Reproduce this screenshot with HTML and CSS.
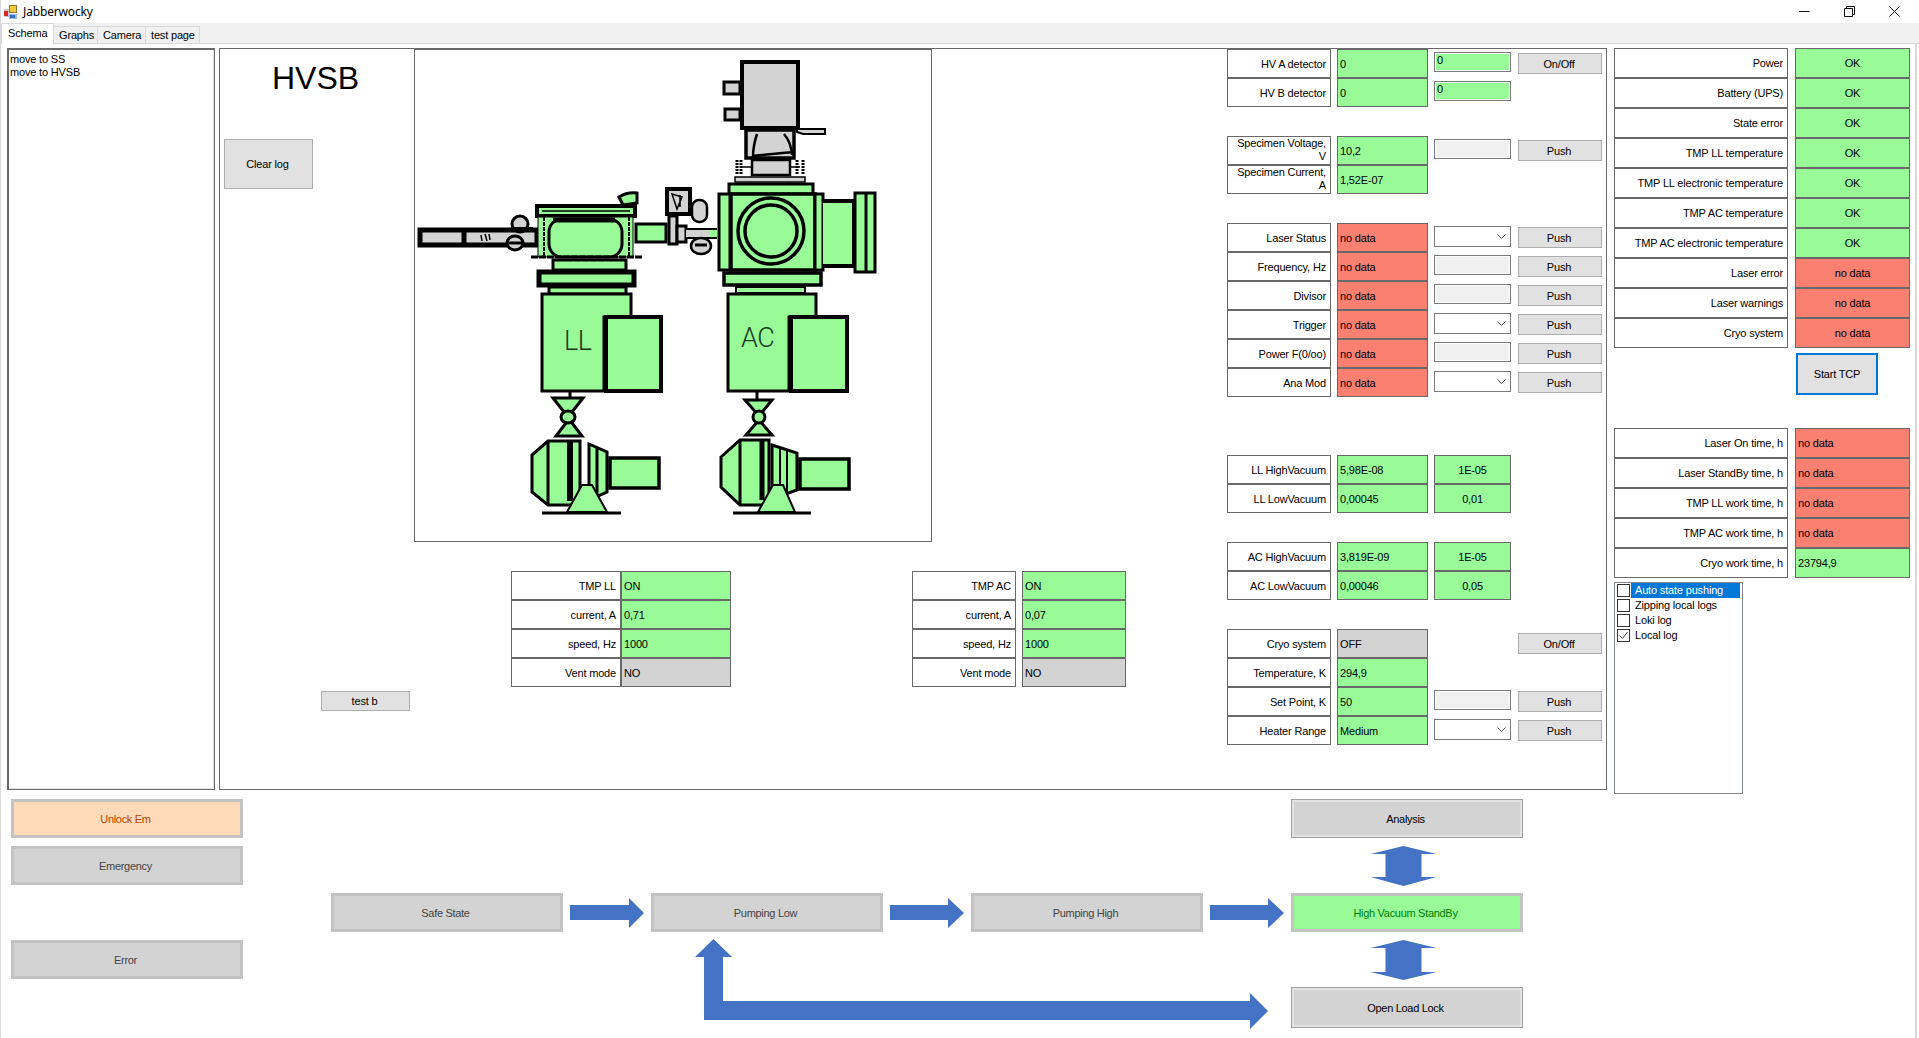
FILE: index.html
```html
<!DOCTYPE html>
<html lang="en">
<head>
    <meta charset="UTF-8">
    <title>Jabberwocky</title>
    <link rel="stylesheet" href="styles.css">
</head>
<body>
    <div class="window">
        <header class="titlebar">
            <svg class="app-icon" width="16" height="16" viewBox="0 0 16 16">
                <rect x="1" y="5" width="5" height="8" fill="#c9c9c9"/>
                <rect x="1" y="7" width="4" height="5" fill="#d22a1e"/>
                <rect x="6" y="1" width="8" height="8" fill="#8a7a3a"/>
                <rect x="7" y="2" width="6" height="6" fill="#f7c93c"/>
                <rect x="6" y="10" width="8" height="5" fill="#9fb6d8"/>
                <rect x="7" y="11" width="5" height="3" fill="#2f6fd0"/>
            </svg>
            <span class="title">Jabberwocky</span>
            <div class="caption">
                <svg width="11" height="11" viewBox="0 0 11 11"><path d="M0 5.5h10.5" stroke="#111" fill="none"/></svg>
                <svg width="11" height="11" viewBox="0 0 11 11"><path d="M.5 2.5h8v8h-8zM2.5 2.5v-2h8v8h-2" stroke="#111" fill="none"/></svg>
                <svg width="11" height="11" viewBox="0 0 11 11"><path d="M.5.5l10 10M10.5.5l-10 10" stroke="#111" fill="none"/></svg>
            </div>
        </header>

        <nav class="tabs">
            <span class="tab active">Schema</span>
            <span class="tab">Graphs</span>
            <span class="tab">Camera</span>
            <span class="tab">test page</span>
        </nav>

        <div class="tab-page">
            <div class="top">
                <div class="log">move to SS<br>move to HVSB</div>

                <main class="main">
                    <div class="left-col">
                        <h1 class="state-name">HVSB</h1>
                        <button class="btn clear-log">Clear log</button>
                        <button class="btn test-b">test b</button>
                    </div>

                    <div class="center-col">
                        <div class="schema">
                            <svg width="516" height="490" viewBox="415 50 516 490">
                                <g stroke="#000" stroke-width="4" fill="#98fb98">
                                    <!-- load lock rod -->
                                    <rect x="420" y="230" width="117" height="15" fill="#d3d3d3" stroke-width="5"/>
                                    <path d="M464 230v15" stroke-width="5"/>
                                    <path d="M481 235l1 6M485 234l2 7M489 234l1 6" stroke-width="1.500" fill="none"/>
                                    <ellipse cx="520" cy="224" rx="8" ry="8" fill="#d3d3d3" stroke-width="3"/>
                                    <path d="M512 229h21" stroke-width="4"/>
                                    <ellipse cx="515" cy="243" rx="8" ry="7" fill="#d3d3d3" stroke-width="3"/>
                                    <path d="M507 243h16" stroke-width="3"/>

                                    <!-- load lock chamber -->
                                    <path d="M619 197q8-5 18-4v10l-14 2z" stroke-width="3"/>
                                    <rect x="537" y="206" width="98" height="10"/>
                                    <path d="M542 211h88" stroke-width="1.500"/>
                                    <rect x="538" y="217" width="95" height="40" stroke-width="1"/>
                                    <path d="M544 217v39M629 217v39" stroke-width="2" stroke-dasharray="4 1"/>
                                    <rect x="549" y="219" width="73" height="38" rx="13" stroke-width="3"/>
                                    <path d="M553 220h62" stroke-width="5"/>
                                    <path d="M531 257h111" stroke-width="3" stroke-dasharray="7 1"/>
                                    <rect x="553" y="260" width="73" height="10" stroke-width="3"/>
                                    <rect x="539" y="272" width="95" height="13" stroke-width="5"/>
                                    <rect x="549" y="287" width="77" height="7" stroke-width="3"/>

                                    <!-- load lock pump -->
                                    <path d="M542 294h89v23h-27v74h-62z" stroke-width="3"/>
                                    <rect x="606" y="317" width="55" height="74" stroke-width="4"/>
                                    <path d="M570 392v6" stroke-width="3"/>
                                    <path d="M553 398h30l-15 19zM556 436h26l-13-17z" stroke-width="3"/>
                                    <ellipse cx="568" cy="417" rx="7" ry="6" stroke-width="3"/>
                                    <path d="M532 455l16-14h32v64h-32l-16-13z" stroke-width="3"/>
                                    <path d="M548 441v64" stroke-width="3"/>
                                    <path d="M570 441v60" stroke-width="6"/>
                                    <path d="M589 444l18 8v40l-18 8z" stroke-width="3"/>
                                    <path d="M597 447v48" stroke-width="3"/>
                                    <rect x="610" y="458" width="49" height="30" stroke-width="3.500"/>
                                    <path d="M582 485l-15 27h40l-15-27z" stroke-width="2"/>
                                    <path d="M542 513h79" stroke-width="3"/>

                                    <!-- transfer valve -->
                                    <rect x="636" y="224" width="30" height="18" stroke-width="3"/>
                                    <rect x="667" y="189" width="23" height="25" fill="#d3d3d3" stroke-width="4"/>
                                    <path d="M672 194l10 3-5 12zM680 195v12" fill="none" stroke-width="1.500"/>
                                    <rect x="669" y="216" width="8" height="28" fill="#d3d3d3" stroke-width="3"/>
                                    <rect x="677" y="226" width="9" height="16" fill="#d3d3d3" stroke-width="3"/>
                                    <path d="M686 229h31M686 238h31" stroke-width="2"/>
                                    <rect x="686" y="230" width="31" height="7" fill="#d3d3d3" stroke="none"/>
                                    <rect x="710" y="230" width="7" height="7" stroke="none"/>
                                    <rect x="692" y="200" width="15" height="22" rx="7" fill="#d3d3d3" stroke-width="2.500"/>
                                    <ellipse cx="701" cy="246" rx="10" ry="8" fill="#d3d3d3" stroke-width="2.500"/>
                                    <path d="M695 245h12" stroke-width="3"/>

                                    <!-- analysis chamber -->
                                    <rect x="742" y="62" width="56" height="66" fill="#d3d3d3"/>
                                    <rect x="724" y="82" width="16" height="12" fill="#d3d3d3" stroke-width="3"/>
                                    <rect x="725" y="109" width="15" height="11" fill="#d3d3d3" stroke-width="3"/>
                                    <path d="M797 129h28v5h-22l-6-2z" fill="#d3d3d3" stroke-width="2"/>
                                    <rect x="746" y="130" width="48" height="28" fill="#d3d3d3" stroke-width="3.500"/>
                                    <path d="M757 134q-4 12-4 23M784 134q7 8 8 21M752 156l41-4" fill="none" stroke-width="2.500"/>
                                    <rect x="752" y="160" width="38" height="15" fill="#d3d3d3" stroke-width="2.500"/>
                                    <path d="M737 160v14M741 160v14M797 160v14M803 160v14" stroke-width="3" stroke-dasharray="2 1" fill="none"/>
                                    <path d="M742 167h9M791 167h9" stroke-width="1.500"/>
                                    <rect x="735" y="177" width="70" height="5" fill="#d3d3d3" stroke-width="1.500"/>
                                    <rect x="729" y="184" width="84" height="10" stroke-width="3"/>
                                    <rect x="719" y="194" width="11" height="76" stroke-width="3"/>
                                    <rect x="731" y="194" width="84" height="76" stroke-width="3.500"/>
                                    <rect x="815" y="194" width="8" height="76" stroke-width="3"/>
                                    <circle cx="771" cy="231" r="33" stroke-width="3.500"/>
                                    <circle cx="771" cy="231" r="26" stroke-width="3.500"/>
                                    <path d="M823 201h31v65h-31" stroke-width="4"/>
                                    <rect x="855" y="193" width="20" height="79" stroke-width="3"/>
                                    <path d="M866 193v79" stroke-width="3"/>
                                    <rect x="724" y="273" width="97" height="12" stroke-width="3.500"/>
                                    <rect x="736" y="287" width="69" height="6" stroke-width="2"/>

                                    <!-- analysis chamber pump -->
                                    <path d="M728 294h88v23h-27v74h-61z" stroke-width="3"/>
                                    <rect x="791" y="317" width="56" height="74" stroke-width="4"/>
                                    <path d="M757 392v7" stroke-width="3"/>
                                    <path d="M745 400h27l-13 16zM746 435h26l-13-15z" stroke-width="3"/>
                                    <ellipse cx="759" cy="417" rx="6" ry="6" stroke-width="3"/>
                                    <path d="M721 457l19-17h29v65h-29l-19-18z" stroke-width="3"/>
                                    <path d="M740 440v65" stroke-width="3"/>
                                    <path d="M762 440v60" stroke-width="5"/>
                                    <path d="M772 445l25 8v37l-25 9z" stroke-width="3"/>
                                    <path d="M780 448v46M787 450v42" stroke-width="2"/>
                                    <rect x="800" y="459" width="49" height="30" stroke-width="3.500"/>
                                    <path d="M773 485l-15 27h37l-12-27z" stroke-width="2"/>
                                    <path d="M733 513h78" stroke-width="3"/>
                                </g>
                                <text class="schema-label" x="564" y="350">LL</text>
                                <text class="schema-label" x="741" y="347">AC</text>
                            </svg>
                        </div>

                        <div class="pumps">
                            <div class="pump pump-ll">
                                <div class="label">TMP LL</div><div class="value ok">ON</div>
                                <div class="label">current, A</div><div class="value ok">0,71</div>
                                <div class="label">speed, Hz</div><div class="value ok">1000</div>
                                <div class="label">Vent mode</div><div class="value off">NO</div>
                            </div>
                            <div class="pump pump-ac">
                                <div class="label">TMP AC</div><div class="value ok">ON</div>
                                <div class="label">current, A</div><div class="value ok">0,07</div>
                                <div class="label">speed, Hz</div><div class="value ok">1000</div>
                                <div class="label">Vent mode</div><div class="value off">NO</div>
                            </div>
                        </div>
                    </div>

                    <div class="fields">
                        <div class="group">
                            <div class="label">HV A detector</div><div class="value ok">0</div>
                            <input class="entry entry-ok" value="0"><button class="btn push">On/Off</button>
                            <div class="label">HV B detector</div><div class="value ok">0</div>
                            <input class="entry entry-ok" value="0"><span></span>
                        </div>

                        <div class="group">
                            <div class="label two-line">Specimen Voltage,<br>V</div><div class="value ok">10,2</div>
                            <input class="entry"><button class="btn push">Push</button>
                            <div class="label two-line">Specimen Current,<br>A</div><div class="value ok">1,52E-07</div>
                            <span></span><span></span>
                        </div>

                        <div class="group wide-gap">
                            <div class="label">Laser Status</div><div class="value bad">no data</div>
                            <div class="combo"><svg width="9" height="5" viewBox="0 0 9 5"><path d="M.5.5l4 4 4-4" fill="none" stroke="#555"/></svg></div><button class="btn push">Push</button>
                            <div class="label">Frequency, Hz</div><div class="value bad">no data</div>
                            <input class="entry"><button class="btn push">Push</button>
                            <div class="label">Divisor</div><div class="value bad">no data</div>
                            <input class="entry"><button class="btn push">Push</button>
                            <div class="label">Trigger</div><div class="value bad">no data</div>
                            <div class="combo"><svg width="9" height="5" viewBox="0 0 9 5"><path d="M.5.5l4 4 4-4" fill="none" stroke="#555"/></svg></div><button class="btn push">Push</button>
                            <div class="label">Power F(0/oo)</div><div class="value bad">no data</div>
                            <input class="entry"><button class="btn push">Push</button>
                            <div class="label">Ana Mod</div><div class="value bad">no data</div>
                            <div class="combo"><svg width="9" height="5" viewBox="0 0 9 5"><path d="M.5.5l4 4 4-4" fill="none" stroke="#555"/></svg></div><button class="btn push">Push</button>
                        </div>

                        <div class="group">
                            <div class="label">LL HighVacuum</div><div class="value ok">5,98E-08</div>
                            <div class="value ok centered">1E-05</div><span></span>
                            <div class="label">LL LowVacuum</div><div class="value ok">0,00045</div>
                            <div class="value ok centered">0,01</div><span></span>
                        </div>

                        <div class="group">
                            <div class="label">AC HighVacuum</div><div class="value ok">3,819E-09</div>
                            <div class="value ok centered">1E-05</div><span></span>
                            <div class="label">AC LowVacuum</div><div class="value ok">0,00046</div>
                            <div class="value ok centered">0,05</div><span></span>
                        </div>

                        <div class="group">
                            <div class="label">Cryo system</div><div class="value off">OFF</div>
                            <span></span><button class="btn push">On/Off</button>
                            <div class="label">Temperature, K</div><div class="value ok">294,9</div>
                            <span></span><span></span>
                            <div class="label">Set Point, K</div><div class="value ok">50</div>
                            <input class="entry"><button class="btn push">Push</button>
                            <div class="label">Heater Range</div><div class="value ok">Medium</div>
                            <div class="combo"><svg width="9" height="5" viewBox="0 0 9 5"><path d="M.5.5l4 4 4-4" fill="none" stroke="#555"/></svg></div><button class="btn push">Push</button>
                        </div>
                    </div>
                </main>

                <aside class="side">
                    <div class="status">
                        <div class="label">Power</div><div class="value ok centered">OK</div>
                        <div class="label">Battery (UPS)</div><div class="value ok centered">OK</div>
                        <div class="label">State error</div><div class="value ok centered">OK</div>
                        <div class="label">TMP LL temperature</div><div class="value ok centered">OK</div>
                        <div class="label">TMP LL electronic temperature</div><div class="value ok centered">OK</div>
                        <div class="label">TMP AC temperature</div><div class="value ok centered">OK</div>
                        <div class="label">TMP AC electronic temperature</div><div class="value ok centered">OK</div>
                        <div class="label">Laser error</div><div class="value bad centered">no data</div>
                        <div class="label">Laser warnings</div><div class="value bad centered">no data</div>
                        <div class="label">Cryo system</div><div class="value bad centered">no data</div>
                    </div>

                    <button class="btn start-tcp">Start TCP</button>

                    <div class="status">
                        <div class="label">Laser On time, h</div><div class="value bad">no data</div>
                        <div class="label">Laser StandBy time, h</div><div class="value bad">no data</div>
                        <div class="label">TMP LL work time, h</div><div class="value bad">no data</div>
                        <div class="label">TMP AC work time, h</div><div class="value bad">no data</div>
                        <div class="label">Cryo work time, h</div><div class="value ok">23794,9</div>
                    </div>

                    <div class="checklist">
                        <div class="check-row"><span class="box"></span><span class="check-text selected">Auto state pushing</span></div>
                        <div class="check-row"><span class="box"></span><span class="check-text">Zipping local logs</span></div>
                        <div class="check-row"><span class="box"></span><span class="check-text">Loki log</span></div>
                        <div class="check-row"><span class="box"><svg width="11" height="11" viewBox="0 0 11 11"><path d="M1.500 5.500l3 3 5-6.500" fill="none" stroke="#444"/></svg></span><span class="check-text">Local log</span></div>
                    </div>
                </aside>
            </div>

            <section class="states">
                <button class="state unlock">Unlock Em</button>
                <button class="state analysis raised">Analysis</button>
                <button class="state emergency">Emergency</button>
                <button class="state safe">Safe State</button>
                <button class="state low">Pumping Low</button>
                <button class="state high">Pumping High</button>
                <button class="state standby">High Vacuum StandBy</button>
                <button class="state error">Error</button>
                <button class="state load-lock raised">Open Load Lock</button>

                <!-- arrows between the states, over the grid -->
                <svg class="arrows" width="1919" height="240" viewBox="0 799 1919 240" fill="#4472c4">
                    <path d="M570 905h59v-7l15 15-15 15v-8h-59z"/>
                    <path d="M890 905h58v-7l16 15-16 15v-8h-58z"/>
                    <path d="M1210 905h58v-7l16 15-16 15v-8h-58z"/>
                    <path d="M1403.500 846l33 8h-15v23h15l-33 9-33-9h15v-23h-15z"/>
                    <path d="M1403.500 940l33 8h-15v24h15l-33 8-33-8h15v-24h-15z"/>
                    <path d="M713.500 939l18.500 18h-9v44h527v-8l18 18-18 18v-9h-546v-63h-9z"/>
                </svg>
            </section>
        </div>
    </div>
</body>
</html>
```

FILE: styles.css
```css
html, body {
    margin: 0;
    padding: 0;
    background: #ffffff;
}

body {
    font-family: "Liberation Sans", Arial, sans-serif;
    font-size: 11px;
    letter-spacing: -0.17px;
    color: #000;
}

.window {
    width: 1919px;
    height: 1038px;
    overflow: hidden;
    box-sizing: border-box;
    border-left: 1px solid #d9d9d9;
}

/* title bar */
.titlebar {
    height: 23px;
    display: flex;
    align-items: center;
    padding-left: 2px;
}

.app-icon {
    margin-right: 4px;
}

.title {
    font-family: "Noto Sans", sans-serif;
    font-size: 12px;
    letter-spacing: -0.15px;
    flex: 1;
}

.caption {
    display: flex;
    gap: 34px;
    padding-right: 19px;
}

/* tabs */
.tabs {
    height: 20px;
    display: flex;
    align-items: flex-end;
    background: #f0f0f0;
    border-bottom: 1px solid #d9d9d9;
    box-sizing: content-box;
}

.tab {
    height: 17px;
    line-height: 17px;
    padding: 0 5px;
    border: 1px solid #d9d9d9;
    border-bottom: none;
    border-left: none;
    box-sizing: border-box;
    font-size: 11px;
    white-space: nowrap;
}

.tab:nth-child(2) { width: 44px; }
.tab:nth-child(3) { width: 48px; }
.tab:nth-child(4) { width: 54px; }

.tab.active {
    width: 53px;
    height: 21px;
    margin-bottom: -1px;
    background: #ffffff;
    padding-left: 6px;
    line-height: 18px;
    border-left: 1px solid #d9d9d9;
    align-self: flex-end;
}

.tab-page {
    border-right: 2px solid #d9d9d9;
    height: 994px;
    width: 1916px;
    padding-top: 4px;
    box-sizing: border-box;
}

.top {
    display: flex;
    height: 742px;
    padding-left: 6px;
}

/* log */
.log {
    width: 208px;
    height: 742px;
    box-sizing: border-box;
    padding: 4px 0 0 2px;
    border: 1px solid #696969;
    box-shadow: inset 1px 1px 0 #696969, inset -1px -1px 0 #e3e3e3;
    line-height: 13px;
}

/* main panel */
.main {
    width: 1388px;
    height: 742px;
    margin-left: 4px;
    box-sizing: border-box;
    border: 1px solid #696969;
    display: flex;
}

.left-col {
    width: 194px;
    flex: none;
    display: flex;
    flex-direction: column;
}

.state-name {
    margin: 13px 0 0 52px;
    font-size: 32px;
    font-weight: normal;
    line-height: 32px;
    letter-spacing: 0;
}

.btn {
    font-family: inherit;
    font-size: inherit;
    letter-spacing: inherit;
    color: #000;
    background: #e1e1e1;
    border: 1px solid #adadad;
    padding: 0 2px 0 0;
}

.clear-log {
    width: 89px;
    height: 50px;
    margin: 45px 0 0 4px;
}

.test-b {
    width: 89px;
    height: 20px;
    margin: 502px 0 0 101px;
}

.center-col {
    width: 813px;
    flex: none;
}

.schema {
    width: 518px;
    height: 493px;
    box-sizing: border-box;
    border: 1px solid #696969;
}

.schema svg {
    display: block;
}

.schema-label {
    font-family: Roboto, "Liberation Sans", sans-serif;
    font-size: 27px;
    font-weight: 300;
    letter-spacing: -0.5px;
    fill: #1a3a1a;
}

.pumps {
    display: flex;
    margin: 29px 0 0 97px;
    gap: 181px;
}

.pump {
    display: grid;
    grid-auto-rows: 29px;
}

.pump-ll {
    grid-template-columns: 110px 110px;
}

.pump-ac {
    grid-template-columns: 104px 104px;
    column-gap: 6px;
}

/* label and value cells, used in every table */
.label,
.value {
    box-sizing: border-box;
    border: 1px solid #696969;
    display: flex;
    align-items: center;
    white-space: nowrap;
}

.label {
    justify-content: flex-end;
    padding-right: 4px;
    background: #ffffff;
}

.two-line {
    display: block;
    text-align: right;
    line-height: 13px;
    padding-top: 0;
}

.value {
    padding-left: 2px;
}

.ok { background: #98fb98; }
.bad { background: #fa8072; }
.off { background: #d3d3d3; }

.centered {
    justify-content: center;
    padding-left: 0;
}

.fields {
    flex: none;
}

.group {
    display: grid;
    grid-template-columns: 104px 91px 77px 84px;
    grid-auto-rows: 29px;
    column-gap: 6px;
    align-items: stretch;
    margin-bottom: 29px;
}

.group .btn {
    margin-left: 1px;
}

.wide-gap {
    margin-bottom: 58px;
}

.entry {
    align-self: center;
    height: 20px;
    width: 77px;
    margin: 0 0 3px;
    padding: 0 2px 4px;
    box-sizing: border-box;
    font-family: inherit;
    font-size: inherit;
    letter-spacing: inherit;
    border: 1px solid #7a7a7a;
    background: #f0f0f0;
    box-shadow: inset 0 0 0 1px #ffffff;
    outline: none;
}

.entry-ok {
    background: #98fb98;
}

.combo {
    align-self: center;
    height: 21px;
    margin-bottom: 2px;
    box-sizing: border-box;
    border: 1px solid #7a7a7a;
    background: #ffffff;
    display: flex;
    align-items: center;
    justify-content: flex-end;
    padding-right: 4px;
}

.push {
    align-self: center;
    height: 21px;
    width: 84px;
}

/* right column */
.side {
    width: 296px;
    margin-left: 7px;
}

.status {
    display: grid;
    grid-template-columns: 174px 115px;
    grid-auto-rows: 30px;
    column-gap: 7px;
}

.start-tcp {
    display: block;
    width: 82px;
    height: 42px;
    margin: 5px 0 33px 182px;
    padding: 0;
    border: 2px solid #0078d7;
}

.checklist {
    width: 129px;
    height: 212px;
    margin-top: 4px;
    padding: 0 2px;
    box-sizing: border-box;
    border: 1px solid #828790;
}

.check-row {
    display: flex;
    align-items: center;
    height: 15px;
}

.box {
    width: 13px;
    height: 13px;
    box-sizing: border-box;
    border: 1px solid #333;
    flex: none;
    display: flex;
}

.check-text {
    flex: 1;
    margin-left: 1px;
    padding-left: 4px;
    line-height: 15px;
}

.selected {
    background: #0078d7;
    color: #ffffff;
}

/* state diagram */
.states {
    position: relative;
    display: grid;
    grid-template-columns: repeat(5, 232px);
    grid-template-rows: repeat(4, 39px) 41px;
    column-gap: 88px;
    row-gap: 8px;
    margin: 9px 0 0 10px;
    width: 1512px;
}

.state {
    font-family: inherit;
    font-size: inherit;
    letter-spacing: -0.3px;
    color: #444;
    background: #d3d3d3;
    border: 3px solid #c3c3c3;
    padding: 0 3px 0 0;
}

.raised {
    color: #000;
    border: 1px solid #a0a0a0;
    box-shadow: inset 0 0 0 2px #e3e3e3;
}

.unlock { grid-area: 1 / 1; background: #ffdab9; color: #b34700; }
.analysis { grid-area: 1 / 5; }
.emergency { grid-area: 2 / 1; }
.safe { grid-area: 3 / 2; }
.low { grid-area: 3 / 3; }
.high { grid-area: 3 / 4; }
.standby { grid-area: 3 / 5; background: #98fb98; color: #008000; }
.error { grid-area: 4 / 1; }
.load-lock { grid-area: 5 / 5; }

.arrows {
    position: absolute;
    left: -11px;
    top: 0;
    pointer-events: none;
}
```
